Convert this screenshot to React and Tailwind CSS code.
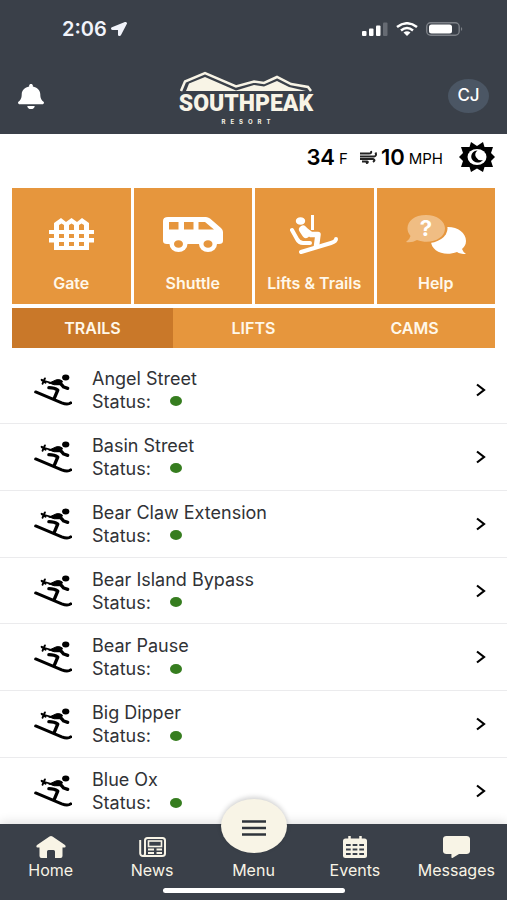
import React, { useState } from "react";
import { FaBell, FaLocationArrow, FaCommentAlt } from "react-icons/fa";

const trails = [
  "Angel Street",
  "Basin Street",
  "Bear Claw Extension",
  "Bear Island Bypass",
  "Bear Pause",
  "Big Dipper",
  "Blue Ox",
];

const tabs = ["TRAILS", "LIFTS", "CAMS"];

const GateIcon = () => (
  <svg viewBox="0 0 45 32" className="w-[45px] h-8" fill="currentColor" aria-hidden="true">
    <path
      fillRule="evenodd"
      d="M5 5 L12 0 L17 4 L22.500 0 L28 4 L33 0 L40 5 V12 H45 V16 H40 V20 H45 V24.500 H40 V32 H5 V24.500 H0 V20 H5 V16 H0 V12 H5 Z
         M10 7 V12 H15 V7 L12.500 5.500 Z M20 7 V12 H25 V7 L22.500 5.500 Z M30 7 V12 H35 V7 L32.500 5.500 Z
         M10 16 V20 H15 V16 Z M20 16 V20 H25 V16 Z M30 16 V20 H35 V16 Z
         M10 24 V28 H15 V24 Z M20 24 V28 H25 V24 Z M30 24 V28 H35 V24 Z"
    />
  </svg>
);

const ShuttleIcon = () => (
  <svg viewBox="0 0 60 35" className="w-[60px] h-[35px]" fill="currentColor" aria-hidden="true">
    <path
      fillRule="evenodd"
      d="M5 0 H43 Q45 0 47 1.500 L58 11 Q60 13 60 15 V24 Q60 27 56 27 H4 Q0 27 0 24 V4 Q0 0 5 0 Z
         M6 5 V12.500 H15.500 V5 Z M21 5 V12.500 H30.500 V5 Z M35.500 5 V12.500 H51 L42 5 Z"
    />
    <ellipse cx="15.500" cy="27" rx="9" ry="8" />
    <ellipse cx="45" cy="27" rx="9" ry="8" />
    <ellipse cx="15.500" cy="27" rx="4.500" ry="3.800" fill="#e6963d" />
    <ellipse cx="45" cy="27" rx="4.500" ry="3.800" fill="#e6963d" />
  </svg>
);

const LiftIcon = () => (
  <svg
    viewBox="0 0 48 40"
    className="w-12 h-10"
    fill="none"
    stroke="currentColor"
    strokeLinecap="round"
    strokeLinejoin="round"
    aria-hidden="true"
  >
    <ellipse cx="10.500" cy="7" rx="4.700" ry="3.800" fill="currentColor" stroke="none" />
    <path d="M22.500 1 V16" strokeWidth="3" strokeLinecap="butt" />
    <path d="M2 16 L7 25 Q9 29 13 29 H20" strokeWidth="4" />
    <path d="M13 15.500 L16 20" strokeWidth="8" />
    <path d="M15 16 L21 20.500 H28 L26.500 32" strokeWidth="5.500" />
    <path d="M11 38 L41 29 Q46 27.500 46 25" strokeWidth="4" />
  </svg>
);

const HelpIcon = () => (
  <svg viewBox="0 0 60 41" className="w-[60px] h-[41px]" aria-hidden="true">
    <path d="M42 13 C52 13 60 19 60 27 C60 31 58 33 56 35 Q57 38 60 40 Q54 40 51 38 C38 43 25 37 25 27 C25 19 32 13 42 13 Z" fill="#fff" />
    <ellipse cx="20" cy="14.500" rx="21.500" ry="15" fill="#e6963d" />
    <path d="M20 1 C31 1 39 7 39 14.500 C39 25 24 31 11 26 Q6 29 0 28 Q4 25 4.500 22 C-3 13 4 1 20 1 Z" fill="#f0bd83" />
    <text x="20" y="22" textAnchor="middle" fontSize="22" fontWeight="700" fill="#fff" fontFamily="Inter, sans-serif">?</text>
  </svg>
);

const SkierIcon = () => (
  <svg
    viewBox="0 0 115 96"
    className="w-[38px] h-8"
    fill="none"
    stroke="#000"
    strokeLinecap="round"
    strokeLinejoin="round"
    aria-hidden="true"
  >
    <ellipse cx="96" cy="10" rx="11" ry="9" fill="#000" stroke="none" />
    <path d="M46 27 L68 17 Q78 15 86 21 L82 32 Q60 35 46 27 Z" fill="#000" strokeWidth="3" />
    <path d="M78 26 L90 39 L102 43" strokeWidth="10" />
    <path d="M24 19 L62 29" strokeWidth="5" />
    <path d="M33 13 L26 29 M23 17 L35 26" strokeWidth="6" />
    <path d="M45 41 Q62 41 72 48 L61 74" strokeWidth="10" />
    <path d="M5 54 L84 87 Q102 94 111 87" strokeWidth="9" />
  </svg>
);

const WindIcon = () => (
  <svg viewBox="0 0 17 14" className="w-[17px] h-3.5" fill="none" stroke="#222" strokeWidth="2" aria-hidden="true">
    <path d="M0 3.500 H9 Q12 3.500 11 1" />
    <path d="M0 6.500 H14 Q17 6 15.500 2.500" />
    <path d="M0 9 H13 Q16 10 13 12" />
    <path d="M2 11.500 H7 Q9 12 6 13.500" />
  </svg>
);

const SunMoonIcon = () => (
  <svg viewBox="0 0 36 30" className="w-9 h-[30px]" role="img" aria-label="Clear">
    <path
      d="M18 4 L24 0 L25.500 5 L34 5 L32 11 L36 15 L32 19 L34 25 L25.500 25 L24 30 L18 26.500 L12 30 L10.500 25 L2 25 L4 19 L0 15 L4 11 L2 5 L10.500 5 L12 0 Z"
      fill="#000"
    />
    <ellipse cx="18" cy="15" rx="9.500" ry="8" fill="#fff" />
    <path d="M18.500 8.500 A6.500 6 0 1 0 24 18 A6 5.500 0 0 1 18.500 8.500 Z" fill="#000" />
  </svg>
);

const HomeIcon = () => (
  <svg viewBox="0 0 30 22" className="w-[30px] h-[22px]" fill="currentColor" aria-hidden="true">
    <path d="M13.500 0.500 Q15 -0.500 16.500 0.500 L29 9 Q30.500 11 28.500 11.500 H26.500 V20 Q26.500 22 24.500 22 H19 V15.500 Q19 14 17.500 14 H12.500 Q11 14 11 15.500 V22 H5.500 Q3.500 22 3.500 20 V11.500 H1.500 Q-0.500 11 1 9 Z" />
  </svg>
);

const NewsIcon = () => (
  <svg viewBox="0 0 27 20" className="w-[27px] h-5" fill="none" stroke="currentColor" strokeWidth="2" aria-hidden="true">
    <path d="M1.200 3 V16.500 Q1.500 19 4 19 H23 Q26 19 26 16.500 V3.500 Q26 1 23.500 1 H8.500 Q6 1 6 3.500 V16.500 Q6 19 4 19" />
    <rect x="9.500" y="4" width="13" height="5.500" strokeWidth="1.600" />
    <path d="M9 12.500 H15 M17.500 12.500 H23 M9 16 H15 M17.500 16 H23" strokeWidth="1.800" />
  </svg>
);

const EventsIcon = () => (
  <svg viewBox="0 0 24 22" className="w-6 h-[22px]" aria-hidden="true">
    <path d="M6.500 0 V5 M17.500 0 V5" stroke="currentColor" strokeWidth="2.500" />
    <rect x="0" y="2.500" width="24" height="19.500" rx="2.500" fill="currentColor" />
    <path d="M3 9 H21 M3 13.500 H21 M3 18 H21" stroke="#3a4049" strokeWidth="2.200" strokeDasharray="4.700 1.950" />
  </svg>
);

const Logo = () => (
  <div className="flex flex-col items-center pt-1 text-[#f8f4e6]">
    <svg viewBox="0 0 134 21" className="w-[134px] h-[21px]" aria-hidden="true">
      <path
        d="M2 20 L6 10.500 L26 2 L57 15.500 L75 10.500 L85 12 L98 6 L112 13 L129 16 L132 20"
        fill="none"
        stroke="currentColor"
        strokeWidth="2.500"
      />
      <path d="M7 20 L10 12.500 L26 6 L57 19.500 L75 14 L85 15.500 L98 10 L110 16 L127 20 Z" fill="currentColor" />
    </svg>
    <span className="font-[Roboto,sans-serif] font-black text-[23px] leading-6">SOUTHPEAK</span>
    <span className="mt-0.5 text-[6px] leading-[7px] font-bold tracking-[5px] pl-[5px]">RESORT</span>
  </div>
);

const tiles = [
  { label: "Gate", Icon: GateIcon },
  { label: "Shuttle", Icon: ShuttleIcon },
  { label: "Lifts & Trails", Icon: LiftIcon },
  { label: "Help", Icon: HelpIcon },
];

const StatusBar = () => (
  <div className="flex items-center justify-between h-[58px] pl-[62px] pr-11">
    <div className="flex items-center gap-1 text-[#f1f3fa]">
      <span className="text-[20px] font-semibold">2:06</span>
      <FaLocationArrow className="w-4 h-3.5" preserveAspectRatio="none" />
    </div>
    <div className="flex items-center gap-2">
      <svg viewBox="0 0 26 14" className="w-[26px] h-3.5" fill="#fff" aria-hidden="true">
        <rect x="0" y="9" width="4.500" height="5" rx="1" />
        <rect x="7" y="6.500" width="4.500" height="7.500" rx="1" />
        <rect x="14" y="3.500" width="4.500" height="10.500" rx="1" />
        <rect x="21" y="0.500" width="4.500" height="13.500" rx="1" fill="#666b73" />
      </svg>
      <svg viewBox="0 0 22 14" className="w-[22px] h-3.5" fill="none" stroke="#fff" strokeWidth="2.500" aria-hidden="true">
        <path d="M1 5 Q11 -2.500 21 5" />
        <path d="M5 8.500 Q11 3.500 17 8.500" />
        <path d="M7.500 10.500 Q11 8 14.500 10.500 L11 14 Z" fill="#fff" stroke="none" />
      </svg>
      <svg viewBox="0 0 37 14" className="w-[37px] h-3.5" aria-hidden="true">
        <rect x="0.700" y="0.700" width="32.500" height="12.600" rx="4" fill="none" stroke="#7c8087" strokeWidth="1.400" />
        <rect x="3" y="2.500" width="23" height="9" rx="2.500" fill="#fff" />
        <path d="M35 5 Q37.500 7 35 9 Z" fill="#7c8087" />
      </svg>
    </div>
  </div>
);

const NavItem = ({ label, children }) => (
  <a href="#" className="flex flex-1 flex-col items-center gap-[3px] pt-3 text-[#f8f4e6]">
    <span className="flex h-[22px] items-center">{children}</span>
    <span className="text-[16px] leading-[18px]">{label}</span>
  </a>
);

const App = () => {
  const [activeTab, setActiveTab] = useState("TRAILS");

  return (
    <div className="flex min-h-screen flex-col bg-white font-[Inter,sans-serif] text-[#303236]">
      {/* Header */}
      <header className="h-[134px] bg-[#3a4049]">
        <StatusBar />
        <div className="flex items-center justify-between h-[76px] px-[18px]">
          <button aria-label="Notifications" className="text-white">
            <FaBell className="w-[26px] h-[25px]" preserveAspectRatio="none" />
          </button>
          <Logo />
          <button className="w-[41px] h-[34px] rounded-[50%] bg-[#4b5664] text-white text-[17px] font-medium">
            CJ
          </button>
        </div>
      </header>

      {/* Weather */}
      <div className="flex items-center justify-end h-[54px] pr-3 pb-2 text-black">
        <span className="text-[22px] font-semibold">34</span>
        <span className="ml-1 mr-3 text-[15px] pt-1">F</span>
        <WindIcon />
        <span className="ml-1 text-[22px] font-semibold">10</span>
        <span className="ml-1 mr-4 text-[15px] pt-1">MPH</span>
        <SunMoonIcon />
      </div>

      {/* Quick links */}
      <div className="grid grid-cols-4 gap-[3px] mx-3">
        {tiles.map(({ label, Icon }) => (
          <button
            key={label}
            className="flex flex-col items-center h-[116px] bg-[#e6963d] pt-[25px] text-white"
          >
            <span className="flex h-[42px] items-center">
              <Icon />
            </span>
            <span className="mt-[18px] text-[16px] leading-5 font-semibold whitespace-nowrap text-[#fff8ea]">{label}</span>
          </button>
        ))}
      </div>

      {/* Tabs */}
      <div role="tablist" className="grid grid-cols-3 mx-3 mt-1 mb-[9px] h-10 bg-[#e6963d]">
        {tabs.map((tab) => (
          <button
            key={tab}
            role="tab"
            aria-selected={activeTab === tab}
            onClick={() => setActiveTab(tab)}
            className={`text-[16px] font-semibold text-[#fff8ea] ${activeTab === tab ? "bg-[#c97829]" : ""}`}
          >
            {tab}
          </button>
        ))}
      </div>

      {/* Trail list */}
      <ul className="flex flex-1 flex-col">
        {trails.map((trail) => (
          <li key={trail} className="flex flex-1 border-b border-[#ebebed] last:border-b-0">
            <a href="#" className="flex flex-1 items-center pl-[34px] pr-[21px]">
              <SkierIcon />
              <div className="flex-1 ml-5 text-[18px] leading-[23px]">
                <p>{trail}</p>
                <p className="flex items-center gap-[19px]">
                  Status:
                  <span className="w-3 h-2.5 rounded-[50%] bg-[#367d1f]" />
                </p>
              </div>
              <svg viewBox="0 0 10 14" className="w-2.5 h-3.5" fill="none" stroke="#000" strokeWidth="2.200" aria-hidden="true">
                <path d="M1 1.500 L8 7 L1 12.500" />
              </svg>
            </a>
          </li>
        ))}
      </ul>

      {/* Bottom navigation */}
      <nav className="relative flex h-[76px] bg-[#3a4049] shadow-[0_-2px_10px_rgba(0,0,0,0.12)]">
        <NavItem label="Home">
          <HomeIcon />
        </NavItem>
        <NavItem label="News">
          <NewsIcon />
        </NavItem>
        <NavItem label="Menu">
          <span className="absolute left-1/2 -top-[25px] flex h-[54px] w-[66px] -translate-x-1/2 items-center justify-center rounded-[50%] bg-[#f8f4e6] pt-1 shadow-[0_-2px_5px_rgba(0,0,0,0.18)]">
            <svg viewBox="0 0 24 16" className="w-6 h-4" stroke="#2f343b" strokeWidth="2.400" aria-hidden="true">
              <path d="M0 1.500 H24 M0 8 H24 M0 14.500 H24" />
            </svg>
          </span>
        </NavItem>
        <NavItem label="Events">
          <EventsIcon />
        </NavItem>
        <NavItem label="Messages">
          <FaCommentAlt className="w-[27px] h-[22px]" preserveAspectRatio="none" />
        </NavItem>
        <span className="absolute bottom-[7px] left-1/2 h-[5px] w-[182px] -translate-x-1/2 rounded-full bg-white" />
      </nav>
    </div>
  );
};

export default App;
